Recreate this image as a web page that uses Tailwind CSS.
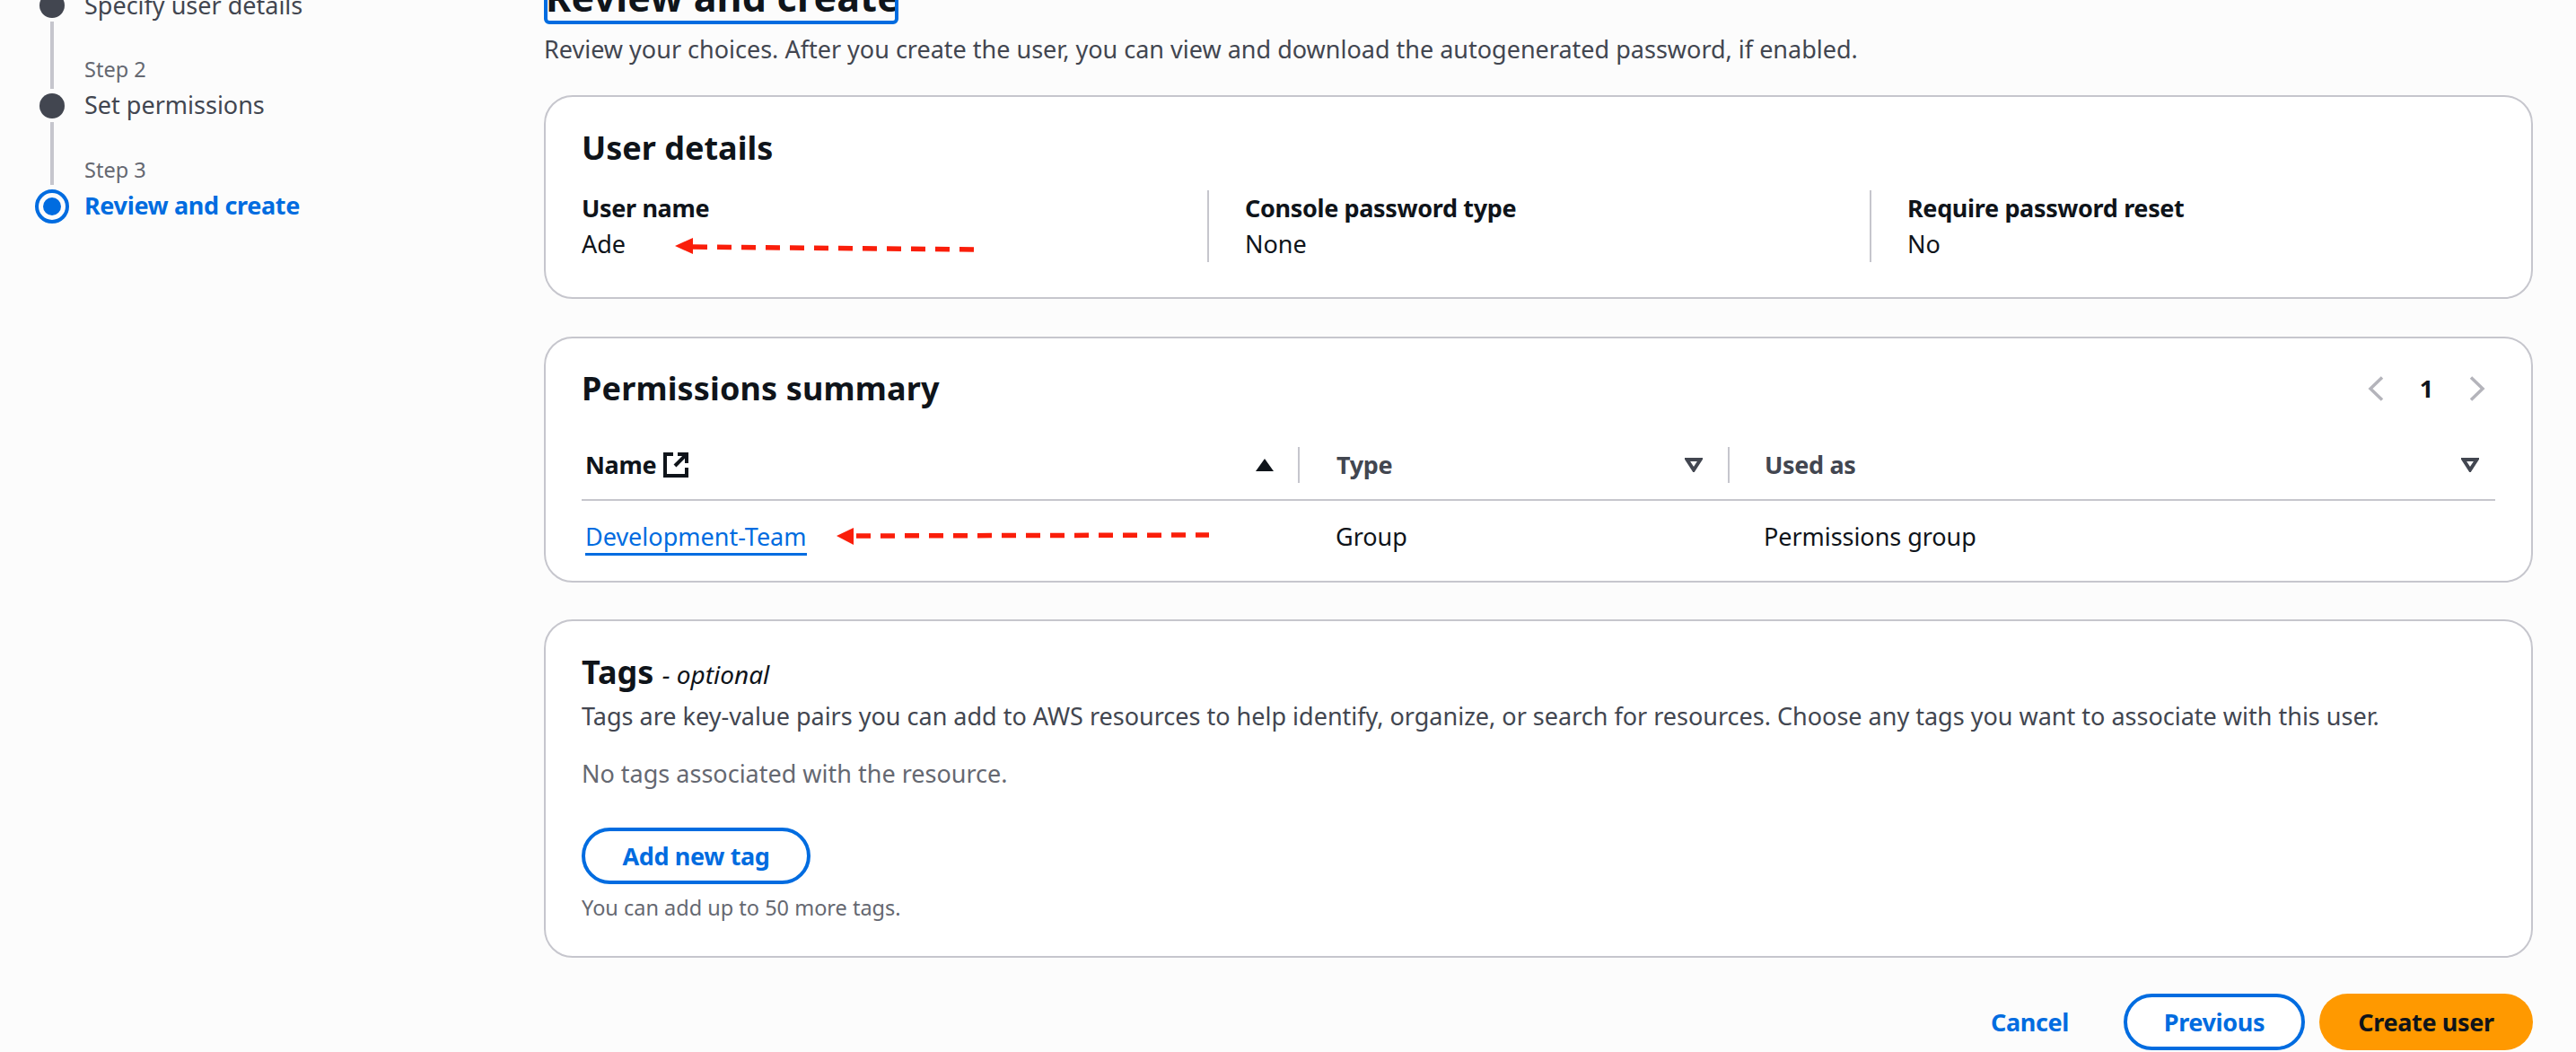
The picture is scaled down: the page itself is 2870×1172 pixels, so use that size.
<!DOCTYPE html>
<html lang="en">
<head>
  <meta charset="UTF-8">
  <title>Review and create</title>
  <script src="https://cdn.jsdelivr.net/npm/@tailwindcss/browser@4"></script>
</head>
<body class="bg-[#fcfcfc] text-[#0f141a] font-['Noto_Sans',sans-serif] text-[27px] leading-[40px]">
  <div class="relative flex h-[1172px] w-[2870px] overflow-hidden">

    <!-- stepper -->
    <aside class="w-[606px] shrink-0 pl-[44px] -mt-[14px]">
      <div class="flex gap-[21px] h-[40px] items-center">
        <span class="w-[28px] h-[28px] rounded-full bg-[#424650]"></span>
        <span class="text-[#424650] ml-[1px]">Specify user details</span>
      </div>
      <div class="flex gap-[21px]">
        <div class="w-[28px] flex justify-center"><span class="w-[4px] h-[75px] -mt-[2px] -mb-[1px] bg-[#c6c6cd]"></span></div>
        <span class="text-[23.5px] leading-[32px] text-[#656871] mt-[35px] ml-[1px]">Step 2</span>
      </div>
      <div class="flex gap-[21px] h-[40px] items-center">
        <span class="w-[28px] h-[28px] rounded-full bg-[#424650]"></span>
        <span class="text-[#424650] -mt-[2px] ml-[1px]">Set permissions</span>
      </div>
      <div class="flex gap-[21px]">
        <div class="w-[28px] flex justify-center"><span class="w-[4px] h-[70px] -mt-[2px] mb-[4px] bg-[#c6c6cd]"></span></div>
        <span class="text-[23.5px] leading-[32px] text-[#656871] mt-[35px] ml-[1px]">Step 3</span>
      </div>
      <div class="flex gap-[21px] h-[40px] items-center -ml-[5px]">
        <span class="w-[38px] h-[38px] shrink-0 rounded-full border-[4px] border-[#006ce0] flex items-center justify-center"><span class="w-[20px] h-[20px] rounded-full bg-[#006ce0]"></span></span>
        <span class="font-bold tracking-[-0.35px] text-[#006ce0] -ml-[4px] -mt-[3px]">Review and create</span>
      </div>
    </aside>

    <!-- main column -->
    <main class="w-[2216px] shrink-0 -mt-[30px]">
      <h1 class="w-[395px] h-[57px] flex items-end pb-[2px] rounded-[6px] border-[4px] border-[#006ce0] text-[43px] leading-[48px] tracking-[0.2px] font-bold whitespace-nowrap overflow-hidden"><span class="-ml-[2px]">Review and create</span></h1>
      <p class="mt-[8px] text-[#424650]">Review your choices. After you create the user, you can view and download the autogenerated password, if enabled.</p>

      <section class="mt-[31px] bg-white rounded-[32px] border-2 border-[#c6c6cd] px-[40px] pt-[35px] pb-[39px]">
        <h2 class="text-[36px] leading-[44px] font-bold">User details</h2>
        <div class="mt-[25px] grid grid-cols-[697px_738px_1fr]">
          <div>
            <div class="font-bold tracking-[-0.35px]">User name</div>
            <div>Ade</div>
          </div>
          <div class="border-l-2 border-[#c6c6cd] pl-[40px]">
            <div class="font-bold tracking-[-0.35px]">Console password type</div>
            <div>None</div>
          </div>
          <div class="border-l-2 border-[#c6c6cd] pl-[40px]">
            <div class="font-bold tracking-[-0.35px]">Require password reset</div>
            <div>No</div>
          </div>
        </div>
      </section>

      <section class="mt-[42px] bg-white rounded-[32px] border-2 border-[#c6c6cd] px-[40px] pt-[34px] pb-[29px]">
        <div class="flex items-center justify-between">
          <h2 class="text-[36px] leading-[44px] tracking-[0.15px] font-bold">Permissions summary</h2>
          <div class="flex items-center mr-[11px]">
            <svg width="18" height="28" viewBox="0 0 18 28" fill="none" stroke="#b4b4bb" stroke-width="3.5"><path d="M16 1.5 3 14l13 12.5"/></svg>
            <span class="w-[95px] text-center font-bold">1</span>
            <svg width="18" height="28" viewBox="0 0 18 28" fill="none" stroke="#b4b4bb" stroke-width="3.5"><path d="M2 1.5 15 14 2 26.5"/></svg>
          </div>
        </div>
        <div class="mt-[43px] grid grid-cols-[798px_479px_1fr] h-[60px] border-b-2 border-[#c6c6cd] font-bold tracking-[-0.35px]">
          <div class="h-[40px] flex items-center pl-[4px] pr-[26px]">
            <span>Name</span>
            <svg class="ml-[7px]" width="30" height="30" viewBox="0 0 30 30" fill="none" stroke="#0f141a" stroke-width="4"><path d="M12 3H3v24h24v-9"/><path d="M17 3h10v10"/><path d="M26 4 14 16"/></svg>
            <svg class="ml-auto" width="22" height="16" viewBox="0 0 22 16"><path d="M11 1 21 15H1z" fill="#0f141a"/></svg>
          </div>
          <div class="h-[40px] flex items-center border-l-2 border-[#c6c6cd] pl-[41px] pr-[28px] text-[#424650]">
            <span>Type</span>
            <svg class="ml-auto" width="20" height="16" viewBox="0 0 20 16" fill="none" stroke="#424650" stroke-width="4"><path d="M2.5 2h15L10 13.5z"/></svg>
          </div>
          <div class="h-[40px] flex items-center border-l-2 border-[#c6c6cd] pl-[39px] pr-[22px] text-[#424650]">
            <span>Used as</span>
            <svg class="ml-auto -mr-[4px]" width="20" height="16" viewBox="0 0 20 16" fill="none" stroke="#424650" stroke-width="4"><path d="M2.5 2h15L10 13.5z"/></svg>
          </div>
        </div>
        <div class="mt-[20px] grid grid-cols-[798px_479px_1fr]">
          <div class="pl-[4px]"><a class="text-[#006ce0] border-b-[3px] border-[#006ce0]">Development-Team</a></div>
          <div class="pl-[42px]">Group</div>
          <div class="pl-[40px] tracking-[-0.05px]">Permissions group</div>
        </div>
      </section>

      <section class="mt-[41px] bg-white rounded-[32px] border-2 border-[#c6c6cd] px-[40px] pt-[35px] pb-[38px]">
        <h2 class="text-[36px] leading-[44px] font-bold">Tags <span class="text-[28px] font-normal italic">- optional</span></h2>
        <p class="mt-[5px] text-[#424650]">Tags are key-value pairs you can add to AWS resources to help identify, organize, or search for resources. Choose any tags you want to associate with this user.</p>
        <p class="mt-[24px] text-[#656871]">No tags associated with the resource.</p>
        <button class="mt-[40px] block w-[255px] h-[63px] rounded-full border-[4px] border-[#006ce0] text-[#006ce0] font-bold tracking-[-0.35px]">Add new tag</button>
        <p class="mt-[10px] text-[23.5px] leading-[32px] text-[#656871]">You can add up to 50 more tags.</p>
      </section>

      <div class="mt-[40px] flex items-center justify-end gap-[16px] font-bold tracking-[-0.35px]">
        <button class="text-[#006ce0] mr-[45px]">Cancel</button>
        <button class="w-[202px] h-[63px] rounded-full border-[4px] border-[#006ce0] bg-white text-[#006ce0]">Previous</button>
        <button class="w-[238px] h-[63px] rounded-full bg-[#ff9900]">Create user</button>
      </div>
    </main>

    <!-- red annotation arrows -->
    <svg class="absolute left-[752px] top-[264px]" width="340" height="20" viewBox="0 0 340 20">
      <path d="M0 10 20 1v18z" fill="#fa1e0a"/>
      <path d="M20 11 338 14" stroke="#fa1e0a" stroke-width="5.5" stroke-dasharray="16 11" fill="none"/>
    </svg>
    <svg class="absolute left-[932px] top-[587px]" width="416" height="20" viewBox="0 0 416 20">
      <path d="M0 10 19 1v19z" fill="#fa1e0a"/>
      <path d="M22 10 415 9" stroke="#fa1e0a" stroke-width="5.5" stroke-dasharray="16 11" fill="none"/>
    </svg>
  </div>
</body>
</html>
